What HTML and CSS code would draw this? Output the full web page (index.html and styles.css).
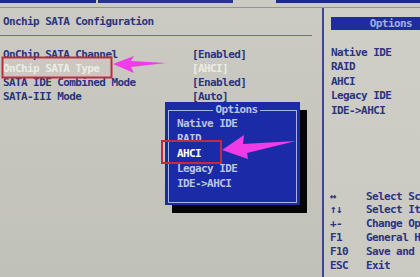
FILE: index.html
```html
<!DOCTYPE html>
<html lang="en">
<head>
<meta charset="utf-8">
<title>Onchip SATA Configuration</title>
<link rel="stylesheet" href="styles.css">
</head>
<body>
<div class="tabs">
  <span class="tab tab-a"></span>
  <span class="tab tab-b"></span>
  <span class="tab-gap"></span>
  <span class="tab tab-c"></span>
</div>
<div class="screen">
  <section class="main">
    <h1 class="title">Onchip SATA Configuration</h1>
    <div class="rows">
      <span class="label">OnChip SATA Channel</span><span class="value">[Enabled]</span>
      <span class="label sel">OnChip SATA Type</span><span class="value sel">[AHCI]</span>
      <span class="label">SATA IDE Combined Mode</span><span class="value">[Enabled]</span>
      <span class="label">SATA-III Mode</span><span class="value">[Auto]</span>
    </div>
  </section>
  <aside class="side">
    <div class="opt-head">Options</div>
    <ul class="opt-list">
      <li>Native IDE</li>
      <li>RAID</li>
      <li>AHCI</li>
      <li>Legacy IDE</li>
      <li>IDE-&gt;AHCI</li>
    </ul>
    <div class="help">
      <span class="key">&#8596;</span><span class="desc">Select Screen</span>
      <span class="key">&#8593;&#8595;</span><span class="desc">Select Item</span>
      <span class="key">+-</span><span class="desc">Change Option</span>
      <span class="key">F1</span><span class="desc">General Help</span>
      <span class="key">F10</span><span class="desc">Save and Exit</span>
      <span class="key">ESC</span><span class="desc">Exit</span>
    </div>
  </aside>
</div>
<div class="popup">
  <fieldset class="frame">
    <legend class="frame-title">Options</legend>
    <ul class="popup-list">
      <li>Native IDE</li>
      <li>RAID</li>
      <li class="active">AHCI</li>
      <li>Legacy IDE</li>
      <li>IDE-&gt;AHCI</li>
    </ul>
  </fieldset>
</div>
<svg class="marks" width="420" height="277" viewBox="0 0 420 277">
  <rect x="2.5" y="57.5" width="109" height="20" fill="none" stroke="#c42a3c" stroke-width="2"/>
  <rect x="162" y="141" width="59" height="22" fill="none" stroke="#c42a3c" stroke-width="2"/>
  <polygon points="113,64 134,56 131,61 166,63 131,67 134,73" fill="#f03ce6"/>
  <polygon points="222,150 244,135 243,144 296,141 247,153 248,159" fill="#f03ce6"/>
</svg>
</body>
</html>
```
FILE: styles.css
```css
html, body {
  margin: 0;
  padding: 0;
}
body {
  width: 420px;
  height: 277px;
  overflow: hidden;
  position: relative;
  background: linear-gradient(180deg, #cbcbc3 0%, #c6c6be 50%, #c0c1b9 100%);
  font-family: "DejaVu Sans Mono", "Liberation Mono", monospace;
  font-weight: bold;
  font-size: 11px;
  letter-spacing: -0.6px;
  color: #2c3480;
}
.tabs {
  display: flex;
  height: 3px;
  margin-bottom: 4px;
}
.tab { background: #1c2a8c; }
.tab-a { width: 96px; }
.tab-b { width: 135px; margin-left: 2px; background: #26348f; }
.tab-gap { width: 43px; }
.tab-c { flex: 1; }
.screen {
  display: flex;
  border-top: 1px solid #8d92aa;
  height: 269px;
}
.main {
  flex: none;
  width: 322px;
  border-right: 2px solid #3d4690;
}
.title {
  margin: 0 10px 0 0;
  padding: 7px 0 6px 3px;
  font-size: 11px;
  font-weight: bold;
  line-height: 14px;
  border-bottom: 1px solid #6a7090;
}
.rows {
  display: grid;
  grid-template-columns: 189px auto;
  margin-top: 12px;
  padding-left: 3px;
  line-height: 14px;
}
.rows .sel { color: #ecece4; }
.side {
  flex: 1;
  min-width: 0;
  overflow: hidden;
  display: flex;
  flex-direction: column;
  padding-left: 7px;
  background: linear-gradient(180deg, #cfcfc8 0%, #cacac3 100%);
}
.opt-head {
  margin-top: 9px;
  height: 13px;
  line-height: 13px;
  background: #1f2c9e;
  color: #9fb0dc;
  text-align: right;
  padding-right: 8px;
}
.opt-list {
  list-style: none;
  margin: 16px 0 0;
  padding: 0;
  line-height: 14.4px;
}
.help {
  margin-top: auto;
  padding: 0 0 4px 0;
  display: grid;
  grid-template-columns: 36px auto;
  line-height: 13.9px;
  white-space: nowrap;
  margin-left: -1px;
}
.popup {
  position: absolute;
  left: 165px;
  top: 102px;
  width: 135px;
  height: 103px;
  box-sizing: border-box;
  padding: 1px 3px 2px;
  background: #1b2aa6;
  box-shadow: 7px 8px 0 #060606;
  color: #b9c4e6;
}
.frame {
  margin: 0;
  padding: 0 0 0 8px;
  min-inline-size: 0;
  height: 100%;
  box-sizing: border-box;
  border: 1px solid #a9b4e0;
}
.frame-title {
  margin: 0 auto;
  padding: 0 2px;
  line-height: 14px;
  color: #b9c4e6;
}
.popup-list {
  list-style: none;
  margin: -1px 0 0;
  padding: 0;
  line-height: 15px;
}
.popup-list .active { color: #ffffff; }
.marks {
  position: absolute;
  left: 0;
  top: 0;
  pointer-events: none;
}
```
